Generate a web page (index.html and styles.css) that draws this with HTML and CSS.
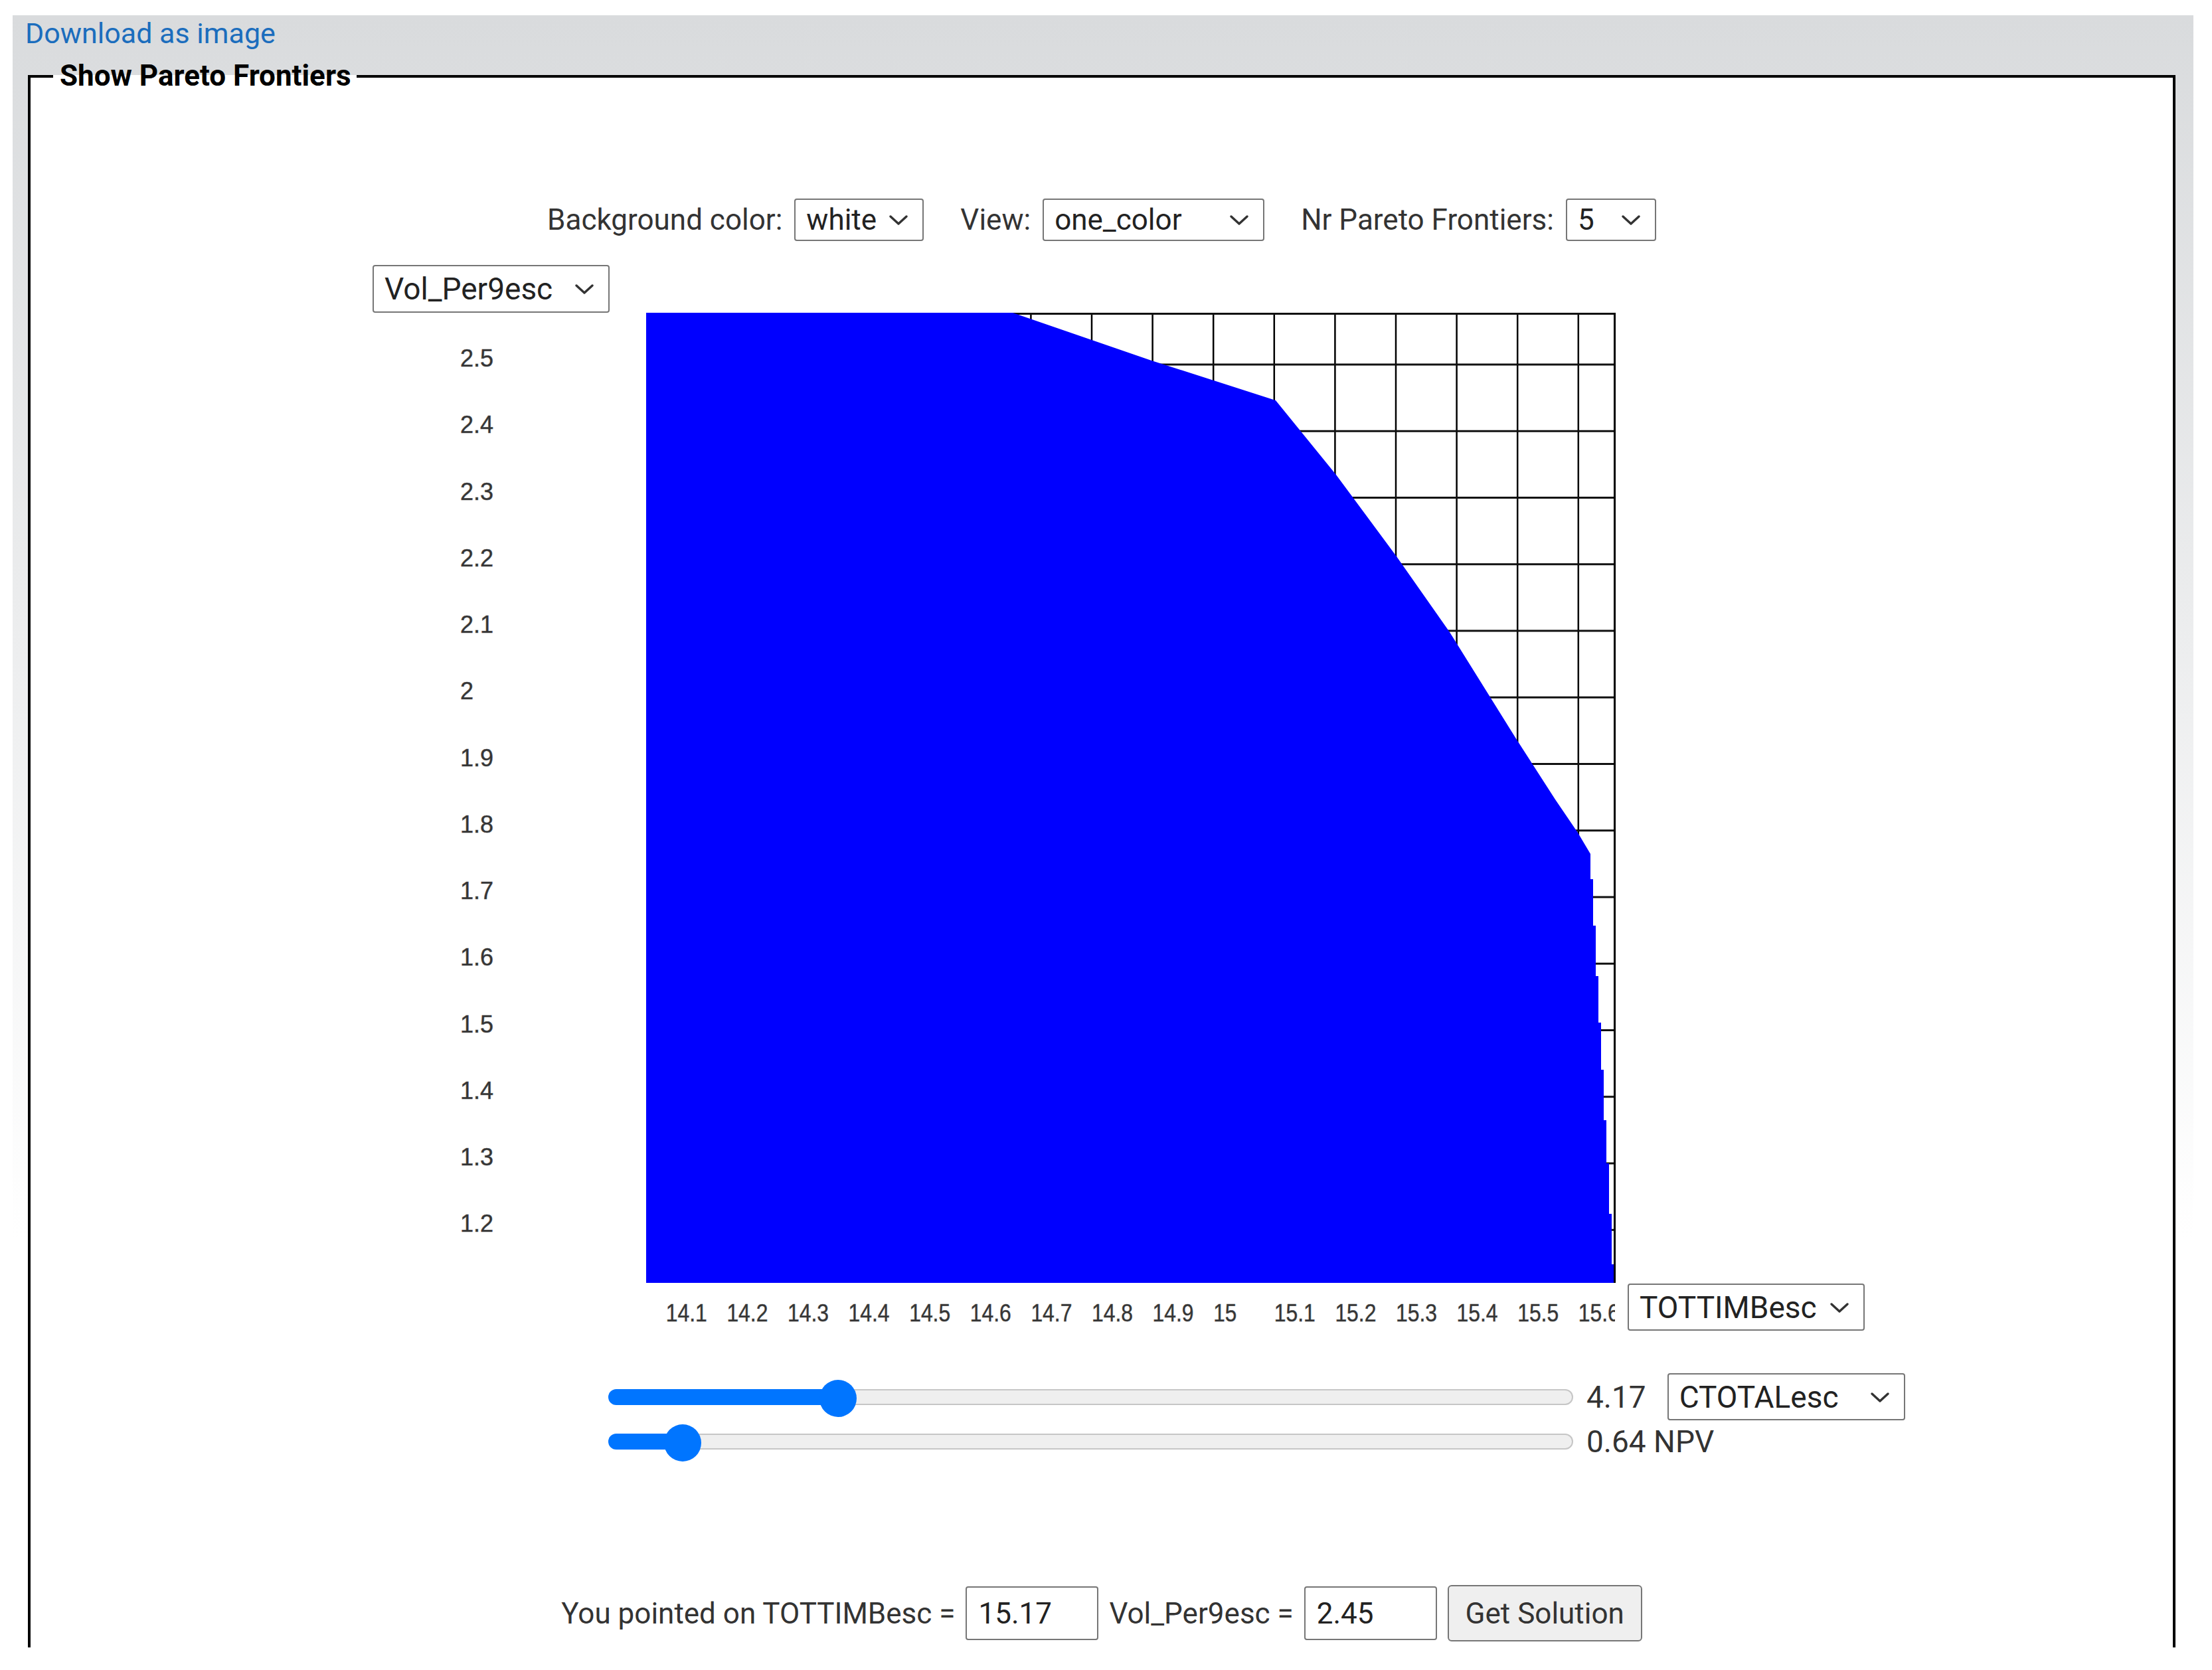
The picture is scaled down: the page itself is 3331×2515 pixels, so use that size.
FILE: index.html
```html
<!DOCTYPE html>
<html lang="en">
<head>
    <meta charset="UTF-8">
    <meta name="viewport" content="width=device-width, initial-scale=1.0">
    <title>Pareto Frontiers</title>
    <link rel="stylesheet" href="styles.css">
</head>
<body>
    <div class="frame">
        <a class="download" href="#">Download as image</a>
        <fieldset class="pareto">
            <legend>Show Pareto Frontiers</legend>

            <!-- chart options -->
            <div class="ctrl-row">
                <div class="ctrl-group">
                    <label for="bg_color">Background color:</label>
                    <span class="select-wrap">
                        <select id="bg_color" class="sel sel-bg">
                            <option>white</option>
                            <option>black</option>
                        </select>
                        <svg class="chev" width="30" height="17" viewBox="0 0 30 17"><path d="M3 3L15 14L27 3"/></svg>
                    </span>
                </div>
                <div class="ctrl-group">
                    <label for="view_select">View:</label>
                    <span class="select-wrap">
                        <select id="view_select" class="sel sel-view">
                            <option>one_color</option>
                            <option>multi_color</option>
                        </select>
                        <svg class="chev" width="30" height="17" viewBox="0 0 30 17"><path d="M3 3L15 14L27 3"/></svg>
                    </span>
                </div>
                <div class="ctrl-group">
                    <label for="nr_frontiers">Nr Pareto Frontiers:</label>
                    <span class="select-wrap">
                        <select id="nr_frontiers" class="sel sel-nr">
                            <option>5</option>
                            <option>10</option>
                        </select>
                        <svg class="chev" width="30" height="17" viewBox="0 0 30 17"><path d="M3 3L15 14L27 3"/></svg>
                    </span>
                </div>
            </div>

            <!-- frontier plot -->
            <div class="chart">
                <span class="select-wrap">
                    <select id="y_axis" class="sel sel-wide">
                        <option>Vol_Per9esc</option>
                    </select>
                    <svg class="chev" width="30" height="17" viewBox="0 0 30 17"><path d="M3 3L15 14L27 3"/></svg>
                </span>
                <div class="chart-body">
                    <svg class="plot" width="1872" height="1533" viewBox="0 0 1872 1533">
                        <defs>
                            <clipPath id="plotClip"><rect x="412" y="1461" width="1459" height="72"/></clipPath>
                        </defs>
                        <g class="grid-v">
                            <line x1="441.8" y1="0" x2="441.8" y2="1461"/>
                            <line x1="533.4" y1="0" x2="533.4" y2="1461"/>
                            <line x1="625" y1="0" x2="625" y2="1461"/>
                            <line x1="716.6" y1="0" x2="716.6" y2="1461"/>
                            <line x1="808.2" y1="0" x2="808.2" y2="1461"/>
                            <line x1="899.8" y1="0" x2="899.8" y2="1461"/>
                            <line x1="991.4" y1="0" x2="991.4" y2="1461"/>
                            <line x1="1083" y1="0" x2="1083" y2="1461"/>
                            <line x1="1174.6" y1="0" x2="1174.6" y2="1461"/>
                            <line x1="1266.2" y1="0" x2="1266.2" y2="1461"/>
                            <line x1="1357.8" y1="0" x2="1357.8" y2="1461"/>
                            <line x1="1449.4" y1="0" x2="1449.4" y2="1461"/>
                            <line x1="1541" y1="0" x2="1541" y2="1461"/>
                            <line x1="1632.6" y1="0" x2="1632.6" y2="1461"/>
                            <line x1="1724.2" y1="0" x2="1724.2" y2="1461"/>
                            <line x1="1815.8" y1="0" x2="1815.8" y2="1461"/>
                        </g>
                        <g class="grid-h">
                            <line x1="412" y1="1.5" x2="1871" y2="1.5"/>
                            <line x1="412" y1="78" x2="1871" y2="78"/>
                            <line x1="412" y1="178.3" x2="1871" y2="178.3"/>
                            <line x1="412" y1="278.5" x2="1871" y2="278.5"/>
                            <line x1="412" y1="378.8" x2="1871" y2="378.8"/>
                            <line x1="412" y1="479" x2="1871" y2="479"/>
                            <line x1="412" y1="579.3" x2="1871" y2="579.3"/>
                            <line x1="412" y1="679.5" x2="1871" y2="679.5"/>
                            <line x1="412" y1="779.8" x2="1871" y2="779.8"/>
                            <line x1="412" y1="880" x2="1871" y2="880"/>
                            <line x1="412" y1="980.3" x2="1871" y2="980.3"/>
                            <line x1="412" y1="1080.5" x2="1871" y2="1080.5"/>
                            <line x1="412" y1="1180.8" x2="1871" y2="1180.8"/>
                            <line x1="412" y1="1281" x2="1871" y2="1281"/>
                            <line x1="412" y1="1381.3" x2="1871" y2="1381.3"/>
                        </g>
                        <polygon class="frontier" points="412,0 964,0 1173,72 1360,132 1451,244 1542,367 1622,481 1723,643 1781,733 1815,783 1834,815 1834,853 1838,853 1838,923 1842,923 1842,999 1846,999 1846,1069 1850,1069 1850,1140 1854,1140 1854,1216 1858,1216 1858,1281 1862,1281 1862,1357 1866,1357 1866,1433 1869,1433 1869,1461 412,1461"/>
                        <line class="plot-edge" x1="1870.5" y1="0" x2="1870.5" y2="1461"/>
                        <g class="y-labels">
                            <text x="132" y="81">2.5</text>
                            <text x="132" y="181.3">2.4</text>
                            <text x="132" y="281.5">2.3</text>
                            <text x="132" y="381.8">2.2</text>
                            <text x="132" y="482">2.1</text>
                            <text x="132" y="582.3">2</text>
                            <text x="132" y="682.5">1.9</text>
                            <text x="132" y="782.8">1.8</text>
                            <text x="132" y="883">1.7</text>
                            <text x="132" y="983.3">1.6</text>
                            <text x="132" y="1083.5">1.5</text>
                            <text x="132" y="1183.8">1.4</text>
                            <text x="132" y="1284">1.3</text>
                            <text x="132" y="1384.3">1.2</text>
                        </g>
                        <g class="x-labels" clip-path="url(#plotClip)">
                            <text x="441.8" y="1519" textLength="62" lengthAdjust="spacingAndGlyphs">14.1</text>
                            <text x="533.4" y="1519" textLength="62" lengthAdjust="spacingAndGlyphs">14.2</text>
                            <text x="625" y="1519" textLength="62" lengthAdjust="spacingAndGlyphs">14.3</text>
                            <text x="716.6" y="1519" textLength="62" lengthAdjust="spacingAndGlyphs">14.4</text>
                            <text x="808.2" y="1519" textLength="62" lengthAdjust="spacingAndGlyphs">14.5</text>
                            <text x="899.8" y="1519" textLength="62" lengthAdjust="spacingAndGlyphs">14.6</text>
                            <text x="991.4" y="1519" textLength="62" lengthAdjust="spacingAndGlyphs">14.7</text>
                            <text x="1083" y="1519" textLength="62" lengthAdjust="spacingAndGlyphs">14.8</text>
                            <text x="1174.6" y="1519" textLength="62" lengthAdjust="spacingAndGlyphs">14.9</text>
                            <text x="1266.2" y="1519" textLength="35" lengthAdjust="spacingAndGlyphs">15</text>
                            <text x="1357.8" y="1519" textLength="62" lengthAdjust="spacingAndGlyphs">15.1</text>
                            <text x="1449.4" y="1519" textLength="62" lengthAdjust="spacingAndGlyphs">15.2</text>
                            <text x="1541" y="1519" textLength="62" lengthAdjust="spacingAndGlyphs">15.3</text>
                            <text x="1632.6" y="1519" textLength="62" lengthAdjust="spacingAndGlyphs">15.4</text>
                            <text x="1724.2" y="1519" textLength="62" lengthAdjust="spacingAndGlyphs">15.5</text>
                            <text x="1815.8" y="1519" textLength="62" lengthAdjust="spacingAndGlyphs">15.6</text>
                        </g>
                    </svg>
                    <span class="select-wrap">
                        <select id="x_axis" class="sel sel-wide sel-x">
                            <option>TOTTIMBesc</option>
                        </select>
                        <svg class="chev" width="30" height="17" viewBox="0 0 30 17"><path d="M3 3L15 14L27 3"/></svg>
                    </span>
                </div>
            </div>

            <!-- filters on the other objectives -->
            <div class="sliders">
                <div class="slider-row">
                    <input type="range" class="range" min="0" max="100" step="0.1" value="22.7" style="--fill: 23.8%">
                    <span class="range-value">4.17</span>
                    <span class="select-wrap">
                        <select id="filter_obj" class="sel sel-wide sel-filter">
                            <option>CTOTALesc</option>
                        </select>
                        <svg class="chev" width="30" height="17" viewBox="0 0 30 17"><path d="M3 3L15 14L27 3"/></svg>
                    </span>
                </div>
                <div class="slider-row slider-row-second">
                    <input type="range" class="range" min="0" max="100" step="0.1" value="5.9" style="--fill: 7.7%">
                    <span class="range-value">0.64 NPV</span>
                </div>
            </div>

            <!-- picked point -->
            <div class="point-row">
                <label for="point_x">You pointed on TOTTIMBesc =</label>
                <input type="text" id="point_x" class="point-input" value="15.17">
                <label for="point_y">Vol_Per9esc =</label>
                <input type="text" id="point_y" class="point-input" value="2.45">
                <button type="button" class="solution-btn">Get Solution</button>
            </div>
        </fieldset>
    </div>
</body>
</html>
```

FILE: styles.css
```css
body {
    margin: 0;
    background-color: #ffffff;
    font-family: Roboto, 'Liberation Sans', sans-serif;
    color: #333;
}

.frame {
    margin: 23px 0 0 19px;
    width: 3284px;
    height: 2458px;
    overflow: hidden;
    background: linear-gradient(to bottom, #d9dbdd 0%, #ffffff 75%);
}

.download {
    display: block;
    width: max-content;
    margin: 1px 0 0 19px;
    font-size: 43px;
    line-height: 52px;
    color: #1b6dbd;
    text-decoration: none;
}

.pareto {
    margin: 14px 27px 0 23px;
    padding: 0 34px 120px 34px;
    border: 4px solid #000;
    background-color: #ffffff;
    min-width: 0;
}

.pareto legend {
    padding: 0 8px 0 10px;
    font-size: 44px;
    font-weight: bold;
    line-height: 49px;
    color: #000;
}

/* options row */
.ctrl-row {
    display: flex;
    justify-content: center;
    align-items: center;
    gap: 55px;
    margin-top: 160px;
    font-size: 44px;
}

.ctrl-group {
    display: flex;
    align-items: center;
    gap: 18px;
}

.select-wrap {
    position: relative;
    display: inline-block;
}

.sel {
    -webkit-appearance: none;
    appearance: none;
    display: block;
    box-sizing: border-box;
    height: 64px;
    padding: 0 60px 0 16px;
    font-family: Roboto, 'Liberation Sans', sans-serif;
    font-size: 44px;
    color: #222;
    background-color: #fff;
    border: 2px solid #767676;
    border-radius: 4px;
}

.sel-bg { width: 195px; }
.sel-view { width: 334px; }
.sel-nr { width: 136px; }

.sel-wide {
    width: 357px;
    height: 72px;
    font-size: 46px;
}

.sel-x { height: 71px; }
.sel-filter { width: 358px; height: 71px; }

.chev {
    position: absolute;
    right: 23px;
    top: 50%;
    margin-top: -8px;
    pointer-events: none;
}

.chev path {
    fill: none;
    stroke: #333;
    stroke-width: 3.5;
    stroke-linecap: round;
    stroke-linejoin: round;
}

/* plot */
.chart {
    margin: 36px 0 0 481px;
}

.chart-body {
    display: flex;
    align-items: flex-end;
    gap: 18px;
}

.plot {
    display: block;
}

.grid-v line {
    stroke: #000;
    stroke-width: 2.5;
}

.grid-h line {
    stroke: #111;
    stroke-width: 3;
}

.frontier {
    fill: #0000ff;
}

.plot-edge {
    stroke: #000;
    stroke-width: 3;
}

.y-labels text,
.x-labels text {
    font-family: 'Liberation Sans', Arial, sans-serif;
    font-size: 36px;
    fill: #333;
    stroke: #555;
    stroke-width: 0.6;
}

/* sliders */
.sliders {
    margin: 64px 0 0 836px;
}

.slider-row {
    display: flex;
    align-items: center;
    height: 71px;
}

.slider-row-second {
    height: 56px;
    margin-top: 4px;
}

.range {
    -webkit-appearance: none;
    appearance: none;
    width: 1453px;
    height: 56px;
    margin: 0;
    background: transparent;
}

.range::-webkit-slider-runnable-track {
    height: 24px;
    border: 2px solid transparent;
    border-radius: 14px;
    background: linear-gradient(to right, #0075ff var(--fill), #efefef var(--fill)) padding-box,
                linear-gradient(to right, #0075ff var(--fill), #c6c6c6 var(--fill)) border-box;
}

.range::-webkit-slider-thumb {
    -webkit-appearance: none;
    width: 56px;
    height: 56px;
    margin-top: -16px;
    border: none;
    border-radius: 50%;
    background-color: #0075ff;
}

.range-value {
    margin-left: 20px;
    margin-right: 32px;
    font-size: 46px;
}

/* picked point */
.point-row {
    display: flex;
    justify-content: center;
    align-items: center;
    gap: 16px;
    margin-top: 188px;
    font-size: 44px;
}

.point-input {
    box-sizing: border-box;
    width: 200px;
    height: 81px;
    padding: 0 12px 0 17px;
    font-family: Roboto, 'Liberation Sans', sans-serif;
    font-size: 44px;
    color: #222;
    border: 2px solid #767676;
    border-radius: 4px;
}

.solution-btn {
    box-sizing: border-box;
    width: 293px;
    height: 85px;
    font-family: Roboto, 'Liberation Sans', sans-serif;
    font-size: 44px;
    color: #333;
    background-color: #efefef;
    border: 2px solid #767676;
    border-radius: 6px;
}
```
